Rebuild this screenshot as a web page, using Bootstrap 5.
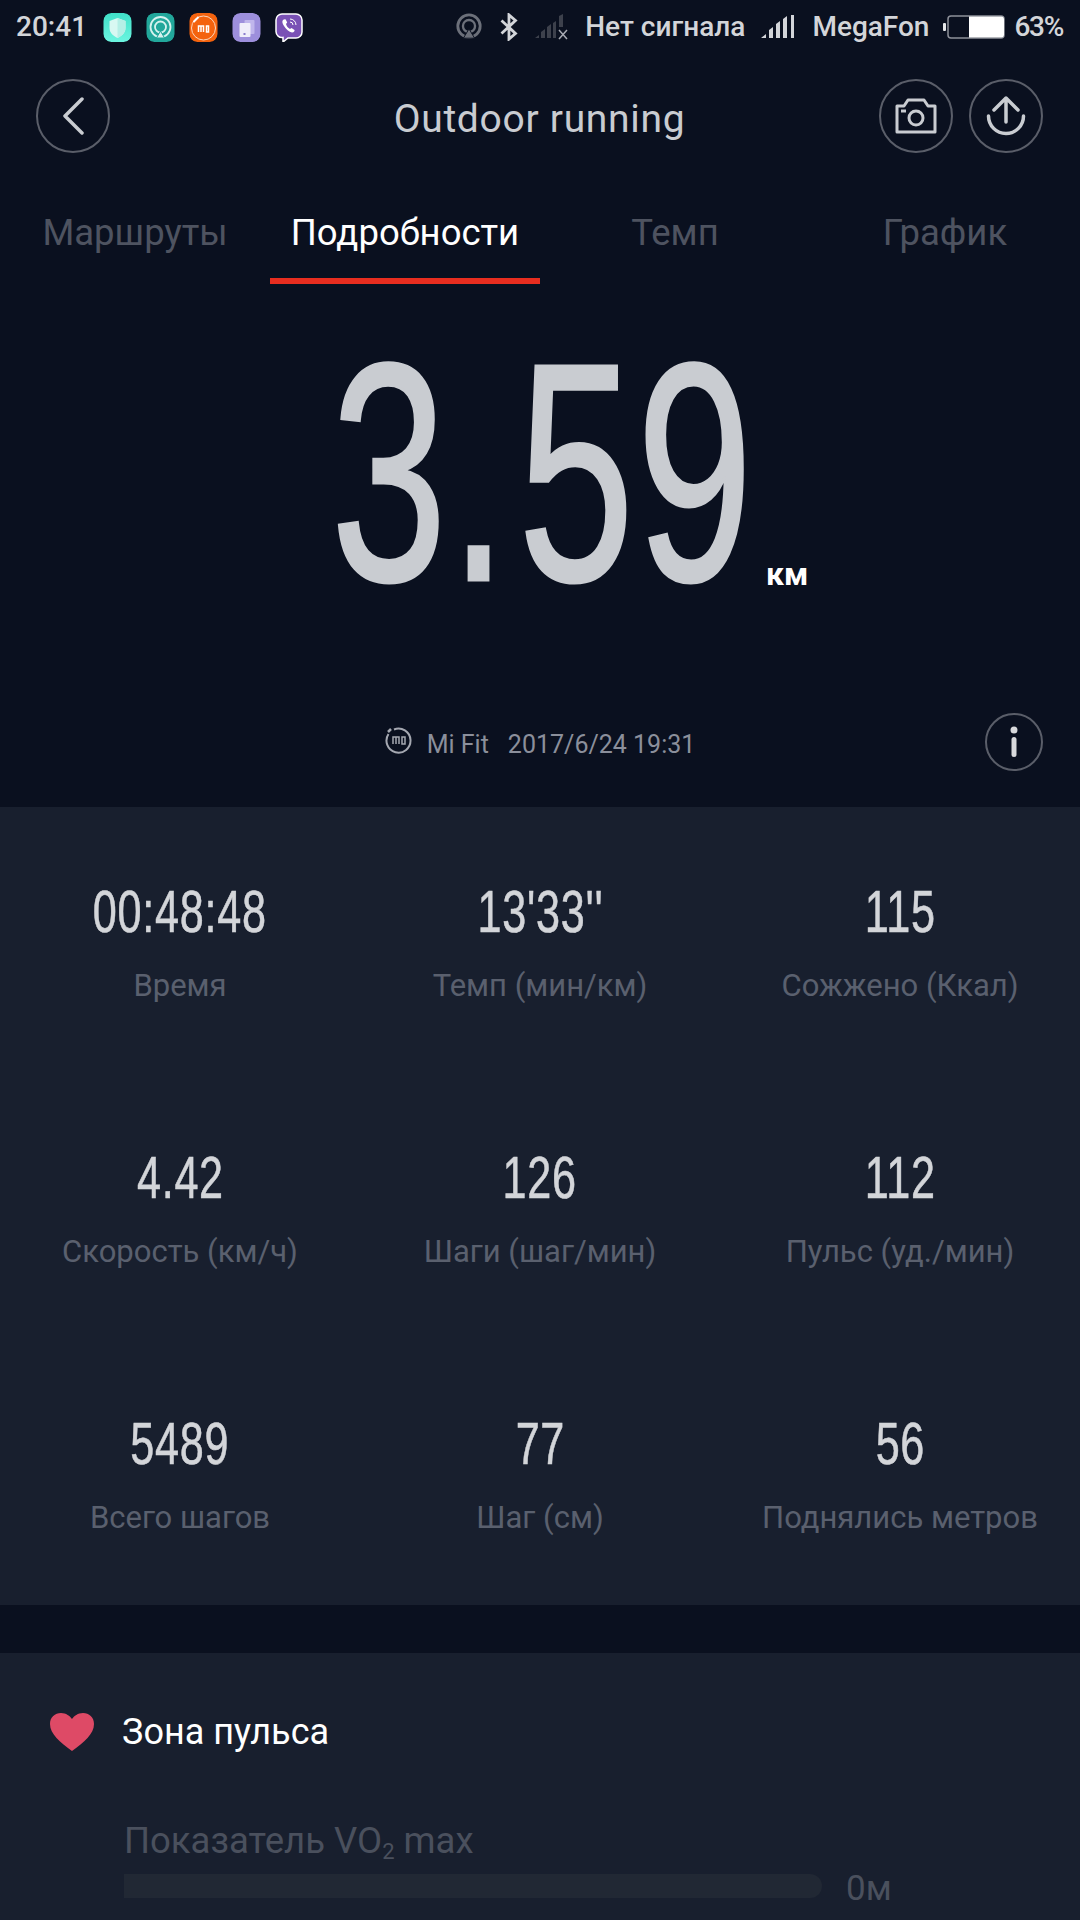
<!DOCTYPE html>
<html lang="ru"><head><meta charset="utf-8">
<link href="https://cdn.jsdelivr.net/npm/bootstrap@5.3.0/dist/css/bootstrap.min.css" rel="stylesheet">
<style>
html,body{margin:0;background:#0a101f;}
body{width:1080px;height:1920px;overflow:hidden;font-family:Roboto,"Liberation Sans",sans-serif;color:#c9ccd1;}
.sbar{height:54px;padding:0 17px 0 16px;font-weight:500;font-size:28px;color:#d3d5d9;}
.sbar svg{display:block;flex:none}
.pct{letter-spacing:-1.300px;}
.appic{width:29px;height:29px;border-radius:8px;}
.head{height:122px;padding:2px 37px 0 36px;}
.sidew{flex:0 0 164px;}
.circ{width:74px;height:74px;border:2px solid #5a5e69;border-radius:50%;flex:none;}
.titl{font-size:39px;color:#c9ccd1;letter-spacing:.7px;padding-top:6px;}
.tabs{height:108px;}
.tabi{width:270px;text-align:center;font-size:36.500px;color:#4e5360;padding-top:35px;line-height:44px;position:relative;}
.tabi.on{color:#fff;}
.tabi.on::after{content:"";position:absolute;left:0;right:0;bottom:0;height:6px;background:#e72d1f;}
.big{height:407px;padding:0 0 30px 331px;}
.bignum{font-family:"Liberation Sans Narrow","Liberation Sans",sans-serif;font-size:311px;line-height:1;color:#c9ccd1;-webkit-text-stroke:3px #c9ccd1;display:inline-block;transform:scaleX(.67);transform-origin:left center;width:427px;white-space:nowrap;letter-spacing:4px;}
.dotg{letter-spacing:16px;}
.unit{font-weight:700;font-size:32px;line-height:40px;color:#fff;margin:0 0 67px 8px;}
.src{height:116px;position:relative;font-size:25px;color:#8b8f9b;padding-top:35px;}
.infob{position:absolute;right:37px;top:22px;width:58px;height:58px;border:2.500px solid #5a5e69;border-radius:50%;}
.panel{background:#181f2e;}
.stats{height:798px;padding-top:69px;}
.statc{height:266px;text-align:center;}
.sval{font-family:"Liberation Sans Narrow","Liberation Sans",sans-serif;font-size:60px;line-height:72px;color:#d3d5d9;-webkit-text-stroke:.6px #d3d5d9;display:inline-block;transform:scaleX(.72);letter-spacing:1px;}
.slab{font-size:31px;line-height:36px;margin-top:20px;color:#5a606e;}
.gap48{height:48px;}
.zone{height:360px;}
.zhead{padding:54px 0 0 50px;font-size:36px;color:#fff;line-height:50px;}
.vo{padding:62px 0 0 124px;font-size:36.500px;color:#4a505d;line-height:44px;}
.barw{padding-left:124px;margin-top:8px;}
.vbar{width:698px;height:24px;border-radius:0 12px 12px 0;background:#212834;}
.vm{font-size:35px;color:#4a505d;line-height:24px;margin-left:24px;padding-top:6px;}
sub{font-size:22px;}
</style></head><body>
<div class="sbar d-flex align-items-center">
<span>20:41</span>
<div class="d-flex align-items-center" style="gap:14px;margin-left:16px">
<svg class="appic" viewBox="0 0 28 29"><defs><linearGradient id="g1" x1="0" y1="0" x2="0" y2="1"><stop offset="0" stop-color="#3fe0c8"/><stop offset="1" stop-color="#6cf5e0"/></linearGradient></defs><rect width="28" height="29" rx="8" fill="url(#g1)"/><path d="M14 5l8 3v7c0 5-4 8-8 10-4-2-8-5-8-10V8z" fill="#d8f8f2"/><path d="M14 5l8 3v7c0 5-4 8-8 10z" fill="#b5efe6"/></svg>
<svg class="appic" viewBox="0 0 28 29"><rect width="28" height="29" rx="8" fill="#22a79b"/><circle cx="14" cy="14" r="10" fill="none" stroke="#d5f2ee" stroke-width="1.800"/><circle cx="14" cy="14" r="5.500" fill="none" stroke="#d5f2ee" stroke-width="1.800"/><path d="M14 18l4 7h-8z" fill="#d5f2ee" stroke="#22a79b"/></svg>
<svg class="appic" viewBox="0 0 28 29"><rect width="28" height="29" rx="8" fill="#f4630e"/><circle cx="14" cy="15" r="12" fill="none" stroke="#fbd6bd" stroke-width="1"/><path d="M4 9l5-5" stroke="#fff" stroke-width="2"/><path d="M9 19v-6h5v6M11.500 13v6M17 13h2v6h-2z" fill="none" stroke="#fff" stroke-width="1.500"/></svg>
<svg class="appic" viewBox="0 0 28 29"><rect width="28" height="29" rx="8" fill="#9d8fdc"/><rect x="12" y="7" width="10" height="14" rx="1" fill="#c0b6ec"/><rect x="7" y="10" width="11" height="14" rx="1" fill="#efedfa"/><rect x="11" y="20" width="2" height="2" fill="#8a7dcc"/></svg>
<svg width="28" height="29" viewBox="0 0 28 29"><path d="M7 1h14a6 6 0 0 1 6 6v12a6 6 0 0 1-6 6h-8l-5 4v-4.500a6 6 0 0 1-7-6V7a6 6 0 0 1 6-6z" fill="#7a51b5" stroke="#fff" stroke-width="1.500"/><path d="M8 7c-1 1-1 3 1 6s5 6 8 6.500c2 0 3-2 2.500-2.500l-3-2-1.500 1c-2-1-3.500-3-4-5l1.200-1.500-1.500-3c-1-.5-2 0-2.700 .5z" fill="#fff"/><path d="M15 6a6 6 0 0 1 6 6M15 9a3 3 0 0 1 3 3" fill="none" stroke="#fff" stroke-width="1"/></svg>
</div>
<div class="d-flex align-items-center ms-auto">
<svg width="28" height="28" viewBox="0 0 30 30" style="margin-right:16px"><circle cx="15" cy="14" r="12" fill="none" stroke="#6c707a" stroke-width="3"/><circle cx="15" cy="14" r="6.500" fill="none" stroke="#6c707a" stroke-width="2.500"/><path d="M15 17l6 10H9z" fill="#6c707a" stroke="#0a101f"/></svg>
<svg width="19" height="28" viewBox="0 0 19 30" style="margin-right:17px"><path d="M2 8l15 14-7 6V2l7 6L2 22" fill="none" stroke="#d3d5d9" stroke-width="3"/></svg>
<svg width="34" height="26" viewBox="0 0 34 26" style="margin-right:16px"><path d="M0 24l4-3v3zM6 24v-6l4-3v9zM12 24V13l4-3v14zM18 24V9l3-2v17zM24 13V2l4-2v13z" fill="#3d414c"/><path d="M24 16l8 9M32 16l-8 9" stroke="#a8abb3" stroke-width="1.500"/></svg>
<span style="margin-right:16px">Нет сигнала</span>
<svg width="35" height="24" viewBox="0 0 35 24" style="margin-right:16px"><path d="M0 23l5-4v4zM8 23v-8l4-3v11zM15 23V9l4-3v17zM22 23V4l4-3v22zM30 23V0h3v23z" fill="#d3d5d9"/></svg>
<span style="margin-right:14px">MegaFon</span>
<svg width="62" height="24" viewBox="0 0 62 24" style="margin-right:9px"><rect x="0" y="8" width="3" height="8" rx="1" fill="#e6e7e9"/><rect x="5" y="1" width="56" height="22" rx="3" fill="none" stroke="#8d9099" stroke-width="1.500"/><path d="M26 1.500h32a3 3 0 0 1 3 3v15a3 3 0 0 1-3 3H26z" fill="#fff"/></svg>
<span class="pct">63%</span>
</div>
</div>
<div class="head d-flex align-items-center">
<div class="sidew"><div class="circ d-flex align-items-center justify-content-center"><svg width="24" height="38" viewBox="0 0 24 38"><path d="M21 2L4 19l17 17" fill="none" stroke="#c9ccd1" stroke-width="3.500" stroke-linecap="round" stroke-linejoin="round"/></svg></div></div>
<div class="titl flex-grow-1 text-center">Outdoor running</div>
<div class="sidew d-flex justify-content-end" style="gap:16px">
<div class="circ d-flex align-items-center justify-content-center"><svg width="42" height="36" viewBox="0 0 42 36"><path d="M2 8h7l4-6h16l4 6h7v26H2z" fill="none" stroke="#c9ccd1" stroke-width="3" stroke-linejoin="round"/><circle cx="21" cy="20" r="7" fill="none" stroke="#c9ccd1" stroke-width="3"/><path d="M6 13h5" stroke="#c9ccd1" stroke-width="3"/></svg></div>
<div class="circ d-flex align-items-center justify-content-center"><svg width="40" height="40" viewBox="0 0 40 40"><path d="M20 2v24M8 14L20 2l12 12" fill="none" stroke="#c9ccd1" stroke-width="3.500" stroke-linecap="round" stroke-linejoin="round"/><path d="M2.500 20a17.500 17.500 0 0 0 35 0" fill="none" stroke="#c9ccd1" stroke-width="3.500" stroke-linecap="round"/></svg></div>
</div>
</div>
<div class="tabs d-flex">
<div class="tabi">Маршруты</div><div class="tabi on">Подробности</div><div class="tabi">Темп</div><div class="tabi">График</div>
</div>
<div class="big d-flex align-items-center">
<span class="bignum">3<span class="dotg">.</span>59</span><span class="unit align-self-end">км</span>
</div>
<div class="src d-flex align-items-start justify-content-center">
<svg width="28" height="28" viewBox="0 0 28 28" style="margin:0 14px 0 0"><path d="M9 3.500A12 12 0 1 1 3.500 8" fill="none" stroke="#a5a8b1" stroke-width="2"/><path d="M3 6l3-3" stroke="#a5a8b1" stroke-width="2.500"/><path d="M8 18v-7h6v7M11 11v7M17 11h3v7h-3z" fill="none" stroke="#a5a8b1" stroke-width="1.500"/></svg>
<span style="margin-right:19px">Mi Fit</span><span>2017/6/24 19:31</span>
<div class="infob d-flex align-items-center justify-content-center"><svg width="10" height="32" viewBox="0 0 10 32"><circle cx="5" cy="4" r="3.500" fill="#d8d9dc"/><rect x="2.500" y="11" width="5" height="20" rx="2.500" fill="#d8d9dc"/></svg></div>
</div>
<div class="panel stats">
<div class="row g-0">
<div class="col-4 statc"><div class="sval">00:48:48</div><div class="slab">Время</div></div>
<div class="col-4 statc"><div class="sval">13'33''</div><div class="slab">Темп (мин/км)</div></div>
<div class="col-4 statc"><div class="sval">115</div><div class="slab">Сожжено (Ккал)</div></div>
<div class="col-4 statc"><div class="sval">4.42</div><div class="slab">Скорость (км/ч)</div></div>
<div class="col-4 statc"><div class="sval">126</div><div class="slab">Шаги (шаг/мин)</div></div>
<div class="col-4 statc"><div class="sval">112</div><div class="slab">Пульс (уд./мин)</div></div>
<div class="col-4 statc"><div class="sval">5489</div><div class="slab">Всего шагов</div></div>
<div class="col-4 statc"><div class="sval">77</div><div class="slab">Шаг (см)</div></div>
<div class="col-4 statc"><div class="sval">56</div><div class="slab">Поднялись метров</div></div>
</div>
</div>
<div class="gap48"></div>
<div class="panel zone">
<div class="zhead d-flex align-items-center"><svg width="44" height="38" viewBox="0 0 44 38" style="margin-right:28px"><path d="M22 38C10 29 0 21 0 11 0 4 5 0 11 0c5 0 9 3 11 6 2-3 6-6 11-6 6 0 11 4 11 11 0 10-10 18-22 27z" fill="#de4a66"/></svg>Зона пульса</div>
<div class="vo">Показатель VO<sub>2</sub> max</div>
<div class="barw d-flex align-items-center"><div class="vbar"></div><div class="vm">0м</div></div>
</div>
</body></html>
